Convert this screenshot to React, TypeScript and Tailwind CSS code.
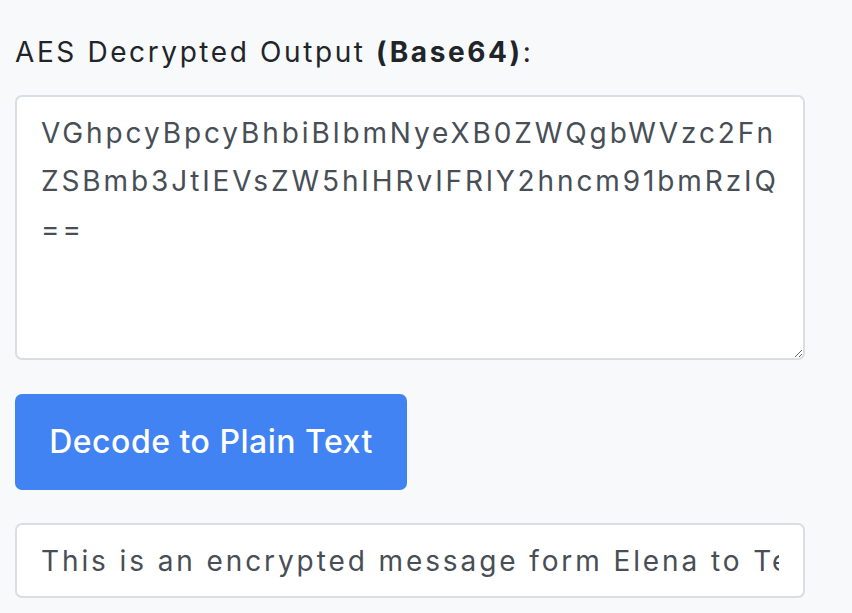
import { useState } from 'react';

const ENCODED = 'VGhpcyBpcyBhbiBlbmNyeXB0ZWQgbWVzc2FnZSBmb3JtIEVsZW5hIHRvIFRlY2hncm91bmRzIQ==';
const PLAIN = 'This is an encrypted message form Elena to Techgrounds!';

export default function App() {
  const [encoded, setEncoded] = useState(ENCODED);
  const [plain, setPlain] = useState(PLAIN);

  return (
    <div className="min-h-screen bg-[#f8f9fa] px-[15px] pt-[31px] font-['Inter',sans-serif]">
      <label className="block text-[28px] leading-[42px] text-[#212529] tracking-[2.6px]">
        AES Decrypted Output <span className="font-bold">(Base64)</span>:
      </label>

      <textarea
        className="mt-[22px] block w-[790px] h-[265px] rounded-[7px] border-2 border-[#dadde1] bg-white pl-[24px] pr-[22px] py-[12px] text-[28px] leading-[48px] text-[#484e55] outline-none break-all tracking-[2.9px]"
        value={encoded}
        onChange={(e) => setEncoded(e.target.value)}
      />

      <button
        type="button"
        className="mt-[34px] block h-[96px] w-[392px] rounded-[7px] bg-[#4183f2] text-[32px] font-medium text-white tracking-[0.5px]"
        onClick={() => setPlain(atob(encoded))}
      >
        Decode to Plain Text
      </button>

      <input
        className="mt-[33px] block h-[75px] w-[790px] rounded-[7px] border-2 border-[#dadde1] bg-white px-[24px] text-[28px] text-[#484e55] outline-none tracking-[2.9px]"
        value={plain}
        readOnly
      />
    </div>
  );
}
